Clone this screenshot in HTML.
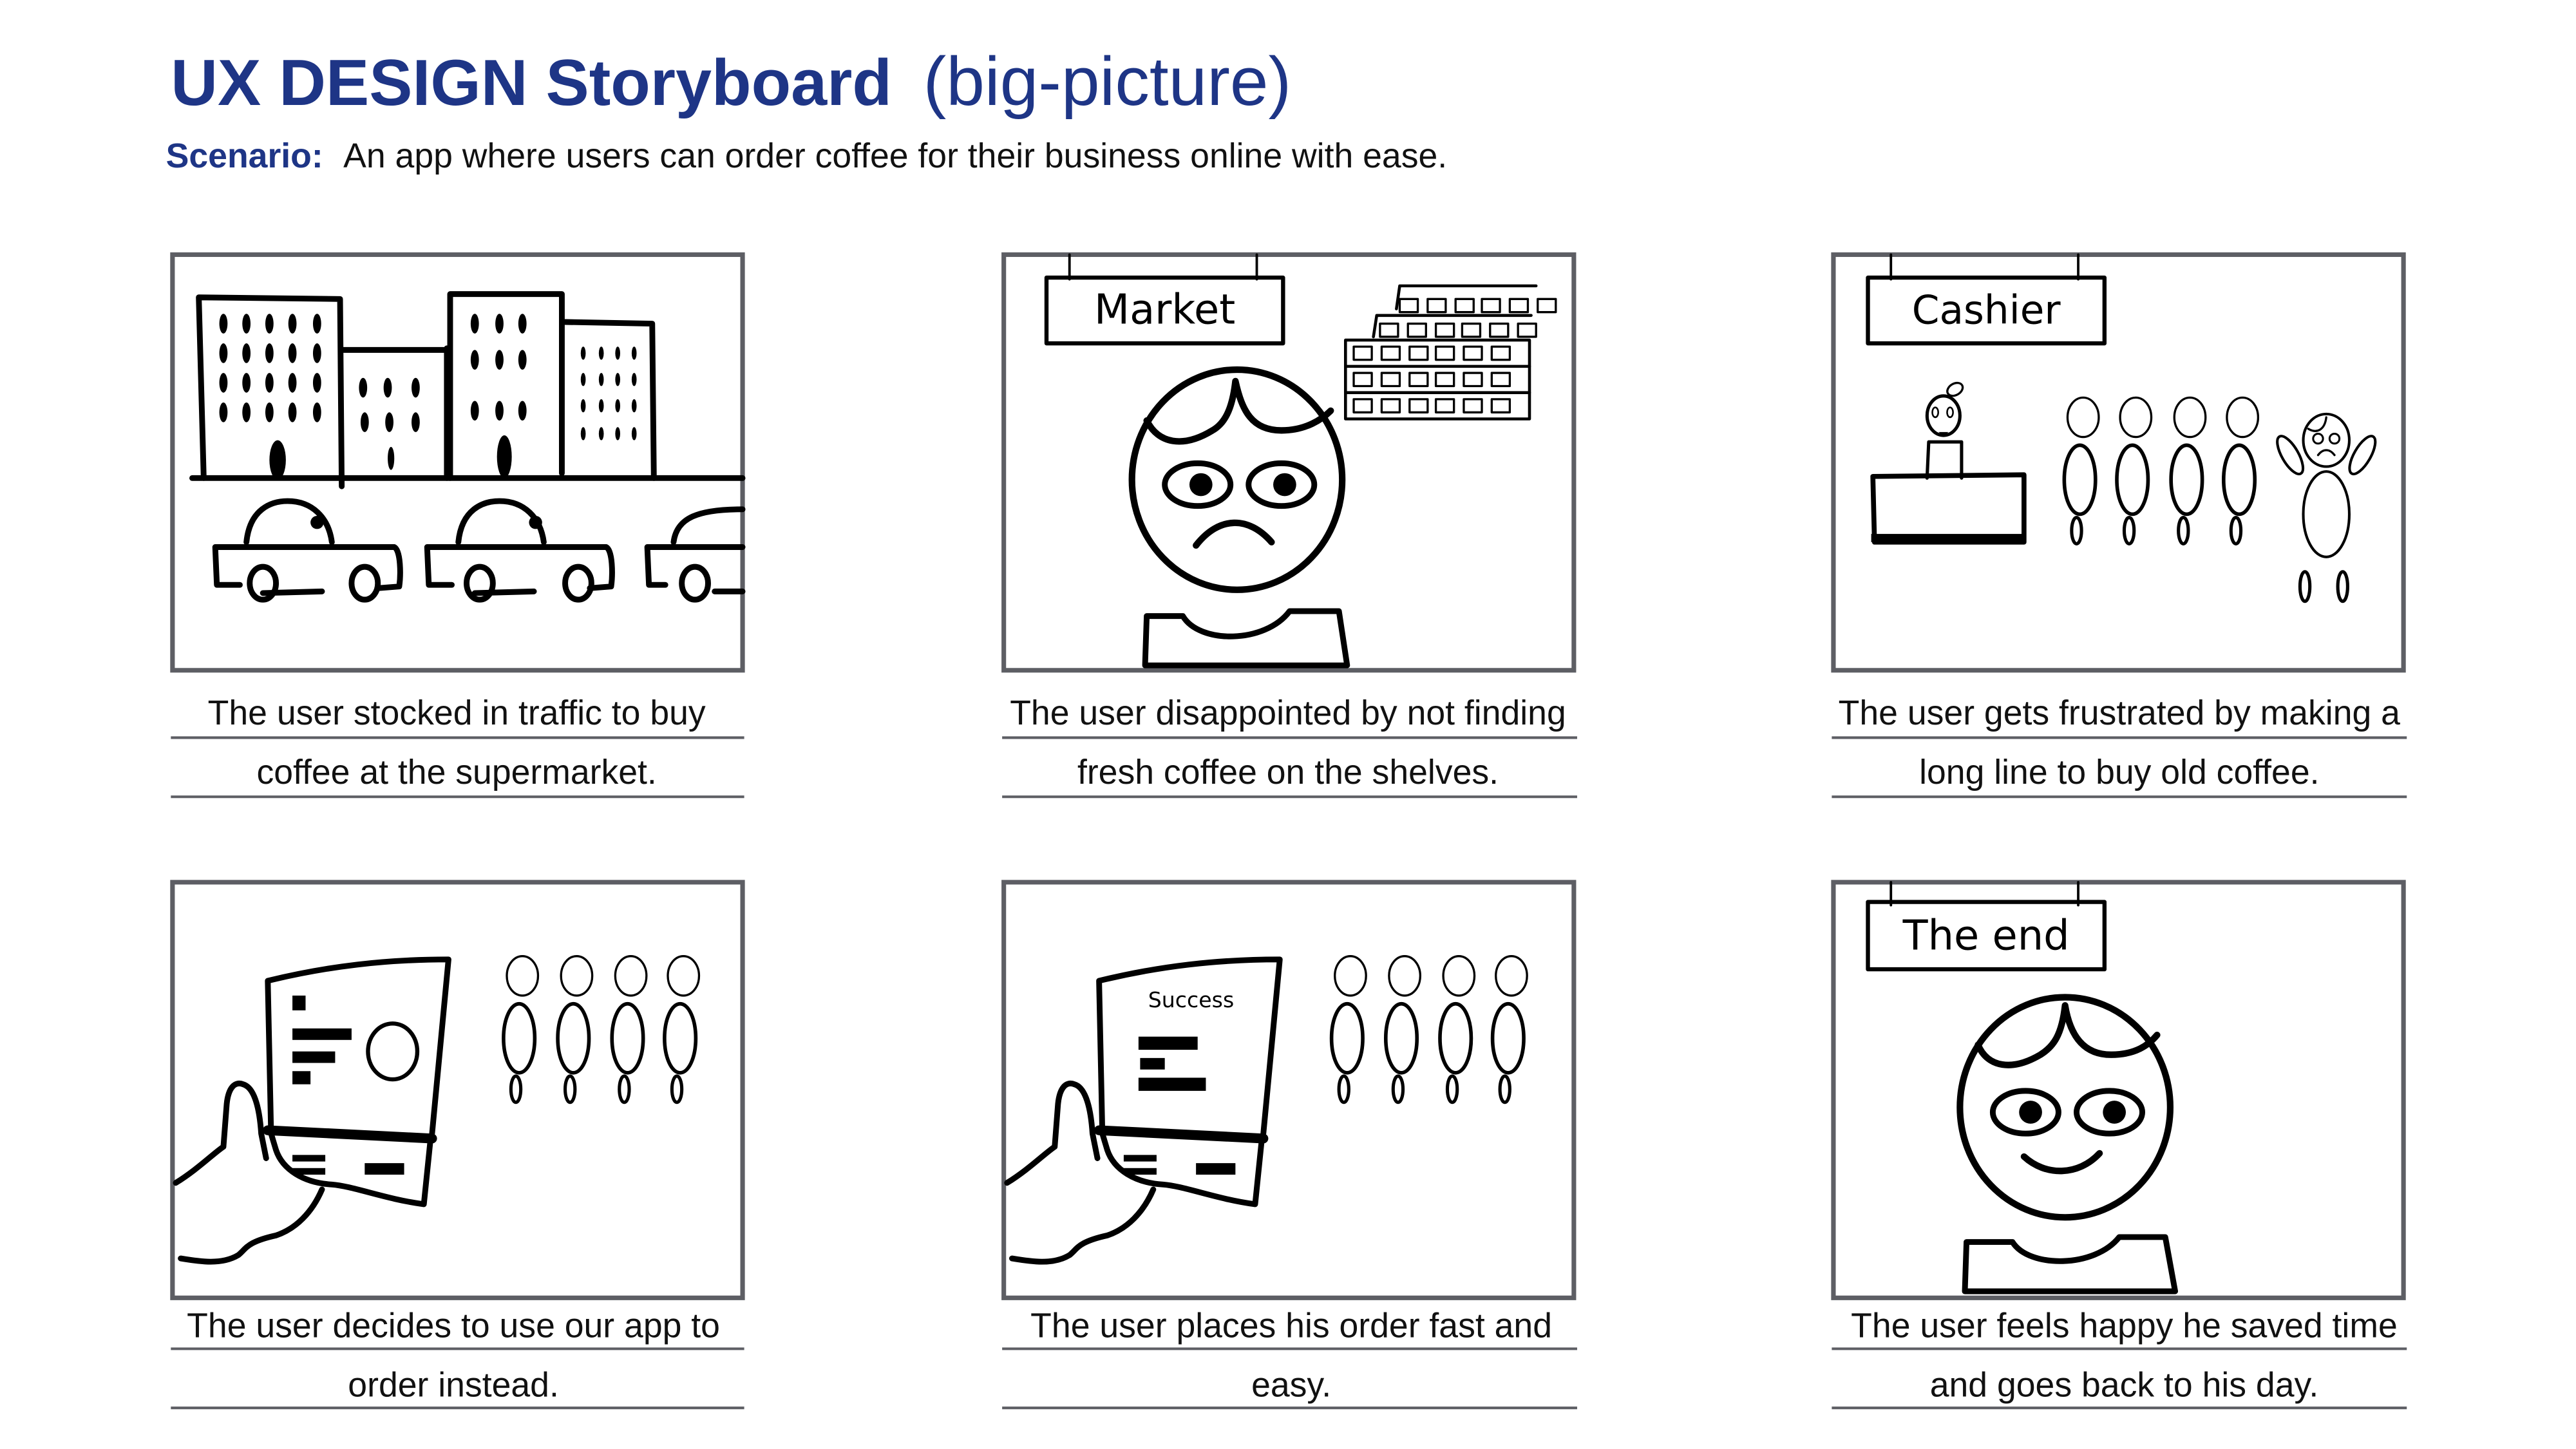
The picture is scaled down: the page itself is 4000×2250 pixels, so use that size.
<!DOCTYPE html>
<html><head><meta charset="utf-8"><style>
html,body{margin:0;padding:0;background:#fff;width:4000px;height:2250px;overflow:hidden}
svg{display:block}
</style></head><body>
<svg width="4000" height="2250" viewBox="0 0 1568 882" xmlns="http://www.w3.org/2000/svg">
<defs>
<g id="person" fill="none" stroke="#000">
  <ellipse cx="0" cy="0" rx="9.5" ry="12" stroke-width="1.3"/>
  <ellipse cx="-2" cy="38" rx="9.5" ry="21" stroke-width="2.2"/>
  <ellipse cx="-4" cy="69" rx="3" ry="8" stroke-width="2"/>
</g>
<g id="hand" fill="none" stroke="#000" stroke-linecap="round" stroke-linejoin="round">
  <path d="M165,690 L163,597 C200,588 235,584 273,584 L263,690" stroke-width="3.5"/>
  <path d="M163,688 L263,693" stroke-width="6"/>
  <path d="M262,694 L258,733 C235,730 215,722 202,721 C185,720 172,712 168,700 L165,690" stroke-width="3.5"/>
  <path d="M107,720 C120,712 130,702 136,698 L138,672 C139,662 143,658 148,660 C155,662 158,675 159,690 L162,705" stroke-width="3.5"/>
  <path d="M196,724 C190,738 180,748 168,752 C150,756 150,760 145,764 C135,770 122,768 110,766" stroke-width="3.5"/>
</g>
</defs>
<rect width="1568" height="882" fill="#fff"/>
<text x="104" y="64" font-family="Liberation Sans, sans-serif" font-weight="700" font-size="39.5" fill="#1e3586">UX DESIGN Storyboard</text>
<text x="562" y="64" font-family="Liberation Sans, sans-serif" font-size="42" fill="#1e3586">(big-picture)</text>
<text x="101" y="102" font-family="Liberation Sans, sans-serif" font-weight="700" font-size="21" fill="#1e3586">Scenario:</text>
<text x="209" y="102" font-family="Liberation Sans, sans-serif" font-size="21" fill="#111">An app where users can order coffee for their business online with ease.</text>

<g fill="none" stroke="#5d5e64" stroke-width="2.8">
<rect x="105" y="155" width="347" height="253"/>
<rect x="611" y="155" width="347" height="253"/>
<rect x="1116" y="155" width="347" height="253"/>
<rect x="105" y="537" width="347" height="253"/>
<rect x="611" y="537" width="347" height="253"/>
<rect x="1116" y="537" width="347" height="253"/>
</g>
<g stroke="#5d5e64" stroke-width="1.6">
<line x1="104" y1="449" x2="453" y2="449"/><line x1="104" y1="485" x2="453" y2="485"/>
<line x1="610" y1="449" x2="960" y2="449"/><line x1="610" y1="485" x2="960" y2="485"/>
<line x1="1115" y1="449" x2="1465" y2="449"/><line x1="1115" y1="485" x2="1465" y2="485"/>
<line x1="104" y1="821" x2="453" y2="821"/><line x1="104" y1="857" x2="453" y2="857"/>
<line x1="610" y1="821" x2="960" y2="821"/><line x1="610" y1="857" x2="960" y2="857"/>
<line x1="1115" y1="821" x2="1465" y2="821"/><line x1="1115" y1="857" x2="1465" y2="857"/>
</g>
<g font-family="Liberation Sans, sans-serif" font-size="21" fill="#111" text-anchor="middle">
<text x="278" y="441">The user stocked in traffic to buy</text>
<text x="278" y="477">coffee at the supermarket.</text>
<text x="784" y="441">The user disappointed by not finding</text>
<text x="784" y="477">fresh coffee on the shelves.</text>
<text x="1290" y="441">The user gets frustrated by making a</text>
<text x="1290" y="477">long line to buy old coffee.</text>
<text x="276" y="814">The user decides to use our app to</text>
<text x="276" y="850">order instead.</text>
<text x="786" y="814">The user places his order fast and</text>
<text x="786" y="850">easy.</text>
<text x="1293" y="814">The user feels happy he saved time</text>
<text x="1293" y="850">and goes back to his day.</text>
</g>

<g fill="none" stroke="#000" stroke-width="3.5" stroke-linecap="round" stroke-linejoin="round">
<path d="M124,291 L121,181 L207,182 L208,296"/>
<path d="M209,213 L272,213 M272,212 L272,291"/>
<path d="M274,291 L274,179 L342,179 L342,288"/>
<path d="M344,196 L397,197 L398,291"/>
<line x1="117" y1="291" x2="452" y2="291"/>
<g id="car">
<path d="M150,330 C152,310 165,305 175,305 C190,305 200,315 202,330"/>
<path d="M132,356 L131,333 L240,333 C244,335 244,350 243,357 L230,358 M196,360 L160,361 M132,356 L146,356"/>
</g>
<use href="#car" x="129"/>
<path d="M410,330 C412,315 425,310 452,310 M395,356 L394,333 L452,333 M452,360 L435,360 M395,356 L405,356"/>
</g>
<g fill="#000">
<g id="win1"><ellipse cx="136" cy="197" rx="2.5" ry="6"/><ellipse cx="150" cy="197" rx="2.5" ry="6"/><ellipse cx="164" cy="197" rx="2.5" ry="6"/><ellipse cx="178" cy="197" rx="2.5" ry="6"/><ellipse cx="193" cy="197" rx="2.5" ry="6"/></g>
<use href="#win1" y="18"/><use href="#win1" y="36"/><use href="#win1" y="54"/>
<ellipse cx="169" cy="280" rx="5" ry="12"/>
<ellipse cx="221" cy="236" rx="2.5" ry="6"/><ellipse cx="236" cy="236" rx="2.5" ry="6"/><ellipse cx="253" cy="236" rx="2.5" ry="6"/>
<ellipse cx="222" cy="257" rx="2.5" ry="6"/><ellipse cx="237" cy="257" rx="2.5" ry="6"/><ellipse cx="253" cy="257" rx="2.5" ry="6"/>
<ellipse cx="238" cy="279" rx="2" ry="7"/>
<ellipse cx="289" cy="197" rx="2.5" ry="6"/><ellipse cx="304" cy="197" rx="2.5" ry="6"/><ellipse cx="318" cy="197" rx="2.5" ry="6"/>
<ellipse cx="289" cy="219" rx="2.5" ry="6"/><ellipse cx="304" cy="219" rx="2.5" ry="6"/><ellipse cx="318" cy="219" rx="2.5" ry="6"/>
<ellipse cx="289" cy="250" rx="2.5" ry="6"/><ellipse cx="304" cy="250" rx="2.5" ry="6"/><ellipse cx="318" cy="250" rx="2.5" ry="6"/>
<ellipse cx="307" cy="278" rx="4.5" ry="13"/>
<g id="win4"><ellipse cx="355" cy="215" rx="1.5" ry="4"/><ellipse cx="366" cy="215" rx="1.5" ry="4"/><ellipse cx="376" cy="215" rx="1.5" ry="4"/><ellipse cx="386" cy="215" rx="1.5" ry="4"/></g>
<use href="#win4" y="16"/><use href="#win4" y="32"/><use href="#win4" y="49"/>
<circle cx="193" cy="318" r="4"/><circle cx="326" cy="318" r="4"/>
<g fill="none" stroke="#000" stroke-width="3.5"><ellipse cx="160" cy="355" rx="8" ry="10"/><ellipse cx="222" cy="355" rx="8" ry="10"/><ellipse cx="292" cy="355" rx="8" ry="10"/><ellipse cx="352" cy="355" rx="8" ry="10"/><ellipse cx="423" cy="355" rx="8" ry="10"/></g>
</g>

<g fill="none" stroke="#000" stroke-linecap="round" stroke-linejoin="round">
<line x1="651" y1="155" x2="651" y2="170" stroke-width="1.5"/><line x1="765" y1="155" x2="765" y2="170" stroke-width="1.5"/>
<rect x="637" y="169" width="144" height="40" stroke-width="2.5"/>
<ellipse cx="753" cy="292" rx="64" ry="67" stroke-width="4"/>
<path d="M698,256 C705,270 720,273 738,262 C745,258 750,250 752,232 C756,250 762,262 780,262 C795,262 805,255 810,250" stroke-width="4"/>
<ellipse cx="729" cy="295" rx="20" ry="13" stroke-width="3.5"/><ellipse cx="780" cy="295" rx="20" ry="13" stroke-width="3.5"/>
<path d="M728,332 C742,314 760,314 774,330" stroke-width="4"/>
<path d="M697,405 L698,375 L720,375 C730,392 770,392 785,372 L815,372 L820,405 Z" stroke-width="3.5"/>
<g stroke-width="1.8">
<path d="M850,188 L852,174 L935,174 M836,205 L838,192 L932,192"/>
<rect x="819" y="207" width="112" height="48"/>
<line x1="819" y1="223" x2="931" y2="223"/><line x1="819" y1="239" x2="931" y2="239"/>
</g>
<g stroke-width="1.3">
<g id="shel"><rect x="824" y="211" width="11" height="8"/><rect x="841" y="211" width="11" height="8"/><rect x="858" y="211" width="11" height="8"/><rect x="874" y="211" width="11" height="8"/><rect x="891" y="211" width="11" height="8"/><rect x="908" y="211" width="11" height="8"/></g>
<use href="#shel" y="16"/><use href="#shel" y="32"/>
<use href="#shel" x="16" y="-14"/><use href="#shel" x="28" y="-29"/>
</g>
</g>
<g fill="#000"><circle cx="731" cy="295" r="7"/><circle cx="782" cy="295" r="7"/></g>
<text x="709" y="197" font-family="DejaVu Sans, sans-serif" font-size="25" text-anchor="middle" fill="#000">Market</text>

<g fill="none" stroke="#000" stroke-linecap="round" stroke-linejoin="round">
<line x1="1151" y1="155" x2="1151" y2="170" stroke-width="1.5"/><line x1="1265" y1="155" x2="1265" y2="170" stroke-width="1.5"/>
<rect x="1137" y="169" width="144" height="40" stroke-width="2.5"/>
<path d="M1140,290 L1232,289 L1232,330 L1141,330 Z" stroke-width="3"/>
<path d="M1173,291 L1174,269 L1194,269 L1194,291" stroke-width="2"/>
<ellipse cx="1183" cy="253" rx="10" ry="12" stroke-width="2"/>
<ellipse cx="1190" cy="237" rx="5" ry="3.5" stroke-width="1.3" transform="rotate(-30 1190 237)"/>
<ellipse cx="1178" cy="251" rx="1.8" ry="3" stroke-width="1"/><ellipse cx="1187" cy="251" rx="1.8" ry="3" stroke-width="1"/>
<ellipse cx="1416" cy="268" rx="14" ry="16" stroke-width="1.6"/>
<ellipse cx="1416" cy="313" rx="14" ry="26" stroke-width="1.6"/>
<ellipse cx="1394" cy="277" rx="5" ry="13" stroke-width="1.6" transform="rotate(-30 1394 277)"/>
<ellipse cx="1438" cy="277" rx="5" ry="13" stroke-width="1.6" transform="rotate(30 1438 277)"/>
<ellipse cx="1403" cy="357" rx="3" ry="9" stroke-width="2"/><ellipse cx="1426" cy="357" rx="3" ry="9" stroke-width="2"/>
<circle cx="1411" cy="267" r="3" stroke-width="1.2"/><circle cx="1421" cy="267" r="3" stroke-width="1.2"/>
<path d="M1411,277 C1414,273 1418,273 1421,277 M1405,261 C1410,264 1415,262 1416,254" stroke-width="1.3"/>
</g>
<rect x="1139" y="325" width="94" height="5"/>
<path d="M1180,263 Q1183,266 1186,263" fill="#000"/>
<use href="#person" x="1268" y="254"/><use href="#person" x="1300" y="254"/><use href="#person" x="1333" y="254"/><use href="#person" x="1365" y="254"/>
<text x="1209" y="197" font-family="DejaVu Sans, sans-serif" font-size="24" text-anchor="middle" fill="#000">Cashier</text>

<use href="#hand"/>
<g fill="#000">
<rect x="178" y="606" width="8" height="9"/><rect x="178" y="626" width="36" height="7"/><rect x="178" y="640" width="26" height="7"/><rect x="178" y="652" width="11" height="8"/>
<rect x="178" y="703" width="20" height="4"/><rect x="178" y="711" width="20" height="4"/><rect x="222" y="708" width="24" height="7"/>
</g>
<ellipse cx="239" cy="640" rx="15" ry="17" fill="none" stroke="#000" stroke-width="2.5"/>
<use href="#person" x="318" y="594"/><use href="#person" x="351" y="594"/><use href="#person" x="384" y="594"/><use href="#person" x="416" y="594"/>

<use href="#hand" x="506"/>
<text x="725" y="613" font-family="DejaVu Sans, sans-serif" font-size="13" text-anchor="middle" fill="#000">Success</text>
<g fill="#000">
<rect x="693" y="631" width="36" height="8"/><rect x="694" y="644" width="15" height="7"/><rect x="693" y="656" width="41" height="8"/>
<rect x="684" y="703" width="20" height="4"/><rect x="684" y="711" width="20" height="4"/><rect x="728" y="708" width="24" height="7"/>
</g>
<use href="#person" x="822" y="594"/><use href="#person" x="855" y="594"/><use href="#person" x="888" y="594"/><use href="#person" x="920" y="594"/>

<g fill="none" stroke="#000" stroke-linecap="round" stroke-linejoin="round">
<line x1="1151" y1="537" x2="1151" y2="551" stroke-width="1.5"/><line x1="1265" y1="537" x2="1265" y2="551" stroke-width="1.5"/>
<rect x="1137" y="549" width="144" height="41" stroke-width="2.5"/>
<ellipse cx="1257" cy="674" rx="64" ry="67" stroke-width="4"/>
<path d="M1204,636 C1210,650 1225,652 1242,642 C1250,637 1255,630 1257,612 C1260,630 1268,642 1285,642 C1300,642 1308,636 1313,630" stroke-width="4"/>
<ellipse cx="1233" cy="677" rx="20" ry="13" stroke-width="3.5"/><ellipse cx="1284" cy="677" rx="20" ry="13" stroke-width="3.5"/>
<path d="M1232,704 C1245,716 1265,716 1278,702" stroke-width="4"/>
<path d="M1196,786 L1197,756 L1225,756 C1235,772 1275,772 1290,753 L1318,753 L1324,786 Z" stroke-width="3.5"/>
</g>
<g fill="#000"><circle cx="1236" cy="677" r="7"/><circle cx="1287" cy="677" r="7"/></g>
<text x="1209" y="578" font-family="DejaVu Sans, sans-serif" font-size="25" text-anchor="middle" fill="#000">The end</text>
</svg>
</body></html>
